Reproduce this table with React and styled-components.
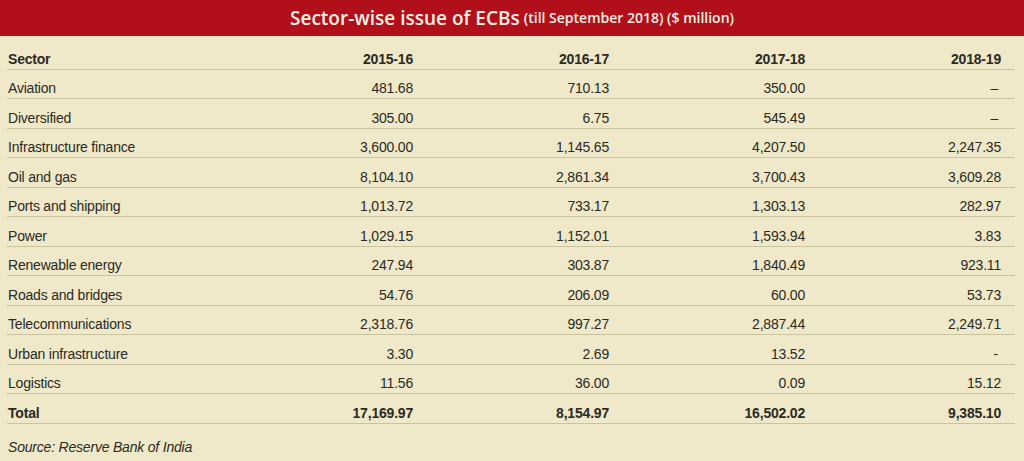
import React from "react";
import styled, { createGlobalStyle } from "styled-components";

const Global = createGlobalStyle`
  html, body { margin: 0; padding: 0; background: #efe9c9; }
  body { font-family: "Liberation Sans", Arial, sans-serif; color: #2b2a25; }
`;

const Page = styled.div`
  width: 1024px;
  height: 461px;
  background: #efe9c9;
  overflow: hidden;
  display: flex;
  flex-direction: column;
`;

const Banner = styled.header`
  height: 36px;
  background: #b1101b;
  color: #fbf1e6;
  display: flex;
  align-items: center;
  justify-content: center;
  font-family: "Open Sans", sans-serif;
  font-weight: 600;
  white-space: nowrap;
  padding-bottom: 1px;
  box-sizing: border-box;
`;

const TitleMain = styled.span`
  font-size: 19px;
  letter-spacing: 0;
`;

const TitleSub = styled.span`
  font-size: 14px;
  margin-left: 4px;
  letter-spacing: 0;
`;

const Table = styled.div`
  margin: 4px 9px 0 7px;
  display: flex;
  flex-direction: column;
`;

const Row = styled.div`
  display: grid;
  grid-template-columns: 210px repeat(4, 196px);
  padding-right: 14px;
  height: 29.5px;
  box-sizing: border-box;
  border-bottom: 1.5px solid #c9c3a0;
  align-items: end;
  padding-bottom: 2px;
  font-size: 14px;
  line-height: 16px;
  letter-spacing: -0.2px;
  font-weight: ${(p) => (p.$bold ? 700 : 400)};
`;

const Cell = styled.div`
  padding-left: 1px;
  text-align: ${(p) => (p.$num ? "right" : "left")};
  padding-right: ${(p) => (p.$dash ? "3px" : "0")};
`;

const Source = styled.div`
  margin: 15px 0 0 8px;
  font-size: 14px;
  font-style: italic;
  letter-spacing: -0.2px;
`;

const head = ["Sector", "2015-16", "2016-17", "2017-18", "2018-19"];
const rows = [
  ["Aviation", "481.68", "710.13", "350.00", "–"],
  ["Diversified", "305.00", "6.75", "545.49", "–"],
  ["Infrastructure finance", "3,600.00", "1,145.65", "4,207.50", "2,247.35"],
  ["Oil and gas", "8,104.10", "2,861.34", "3,700.43", "3,609.28"],
  ["Ports and shipping", "1,013.72", "733.17", "1,303.13", "282.97"],
  ["Power", "1,029.15", "1,152.01", "1,593.94", "3.83"],
  ["Renewable energy", "247.94", "303.87", "1,840.49", "923.11"],
  ["Roads and bridges", "54.76", "206.09", "60.00", "53.73"],
  ["Telecommunications", "2,318.76", "997.27", "2,887.44", "2,249.71"],
  ["Urban infrastructure", "3.30", "2.69", "13.52", "-"],
  ["Logistics", "11.56", "36.00", "0.09", "15.12"],
];
const total = ["Total", "17,169.97", "8,154.97", "16,502.02", "9,385.10"];

function Line({ cells, bold }) {
  return (
    <Row $bold={bold}>
      {cells.map((c, i) => (
        <Cell key={i} $num={i > 0} $dash={c === "–" || c === "-"}>
          {c}
        </Cell>
      ))}
    </Row>
  );
}

export default function App() {
  return (
    <Page>
      <Global />
      <Banner>
        <TitleMain>Sector-wise issue of ECBs</TitleMain>
        <TitleSub>(till September 2018) ($ million)</TitleSub>
      </Banner>
      <Table>
        <Line cells={head} bold />
        {rows.map((r) => (
          <Line key={r[0]} cells={r} />
        ))}
        <Line cells={total} bold />
      </Table>
      <Source>Source: Reserve Bank of India</Source>
    </Page>
  );
}
